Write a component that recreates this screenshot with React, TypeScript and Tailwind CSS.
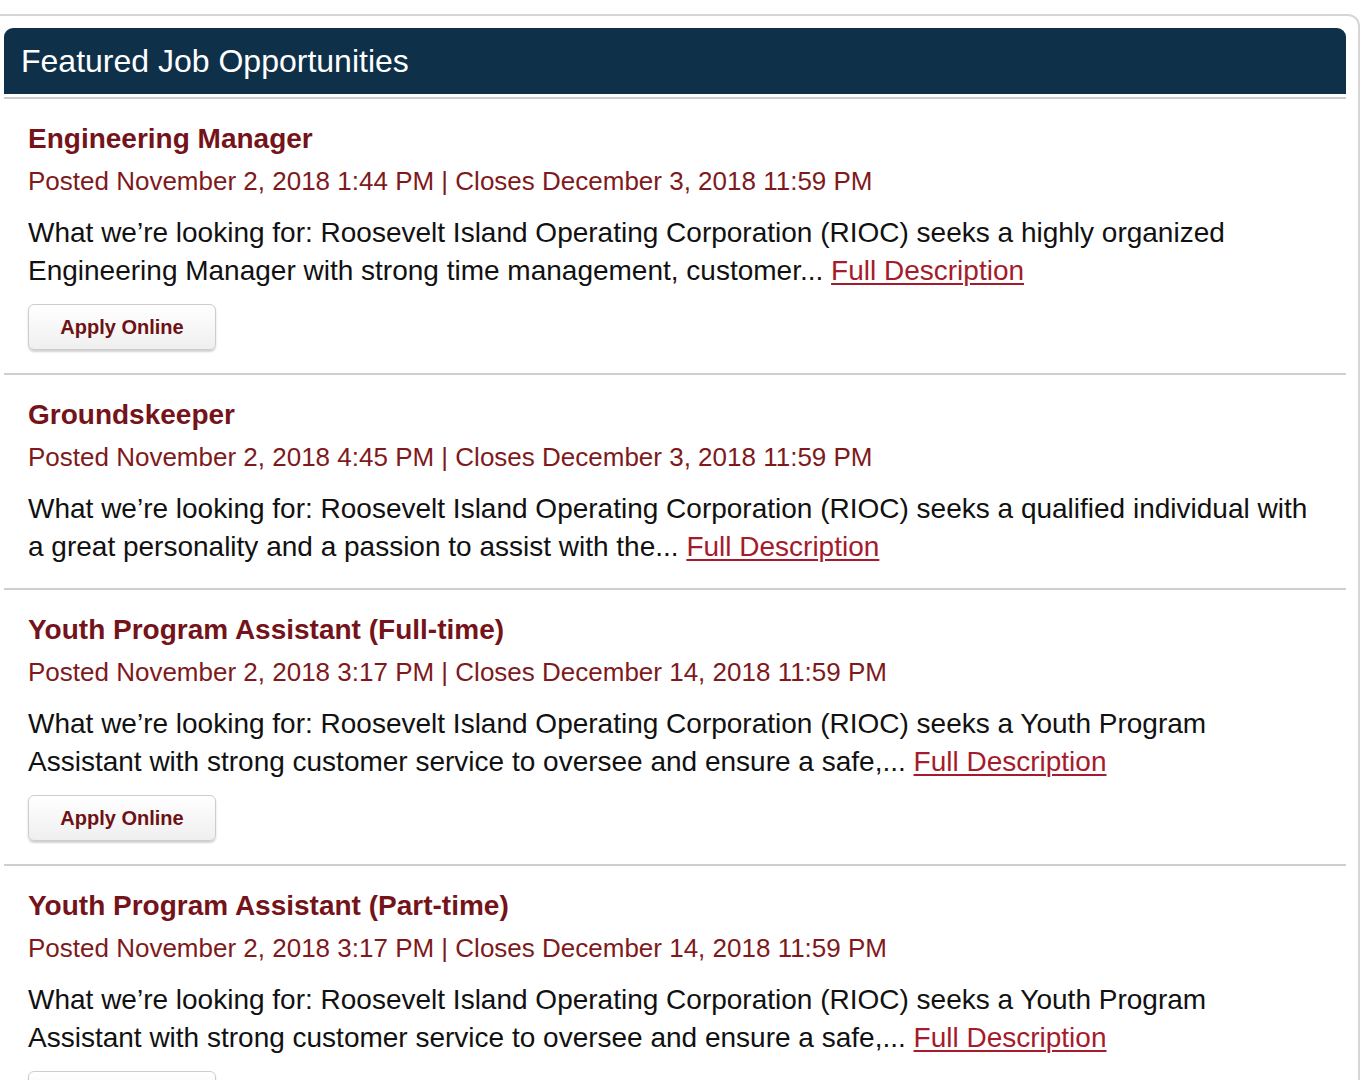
import React from "react";

type Job = {
  title: string;
  posted: string;
  closes: string;
  desc: string;
  apply: boolean;
};

const jobs: Job[] = [
  {
    title: "Engineering Manager",
    posted: "November 2, 2018 1:44 PM",
    closes: "December 3, 2018 11:59 PM",
    desc: "What we\u2019re looking for: Roosevelt Island Operating Corporation (RIOC) seeks a highly organized Engineering Manager with strong time management, customer...",
    apply: true,
  },
  {
    title: "Groundskeeper",
    posted: "November 2, 2018 4:45 PM",
    closes: "December 3, 2018 11:59 PM",
    desc: "What we\u2019re looking for: Roosevelt Island Operating Corporation (RIOC) seeks a qualified individual with a great personality and a passion to assist with the...",
    apply: false,
  },
  {
    title: "Youth Program Assistant (Full-time)",
    posted: "November 2, 2018 3:17 PM",
    closes: "December 14, 2018 11:59 PM",
    desc: "What we\u2019re looking for: Roosevelt Island Operating Corporation (RIOC) seeks a Youth Program Assistant with strong customer service to oversee and ensure a safe,...",
    apply: true,
  },
  {
    title: "Youth Program Assistant (Part-time)",
    posted: "November 2, 2018 3:17 PM",
    closes: "December 14, 2018 11:59 PM",
    desc: "What we\u2019re looking for: Roosevelt Island Operating Corporation (RIOC) seeks a Youth Program Assistant with strong customer service to oversee and ensure a safe,...",
    apply: true,
  },
];

function JobItem({ job }: { job: Job }) {
  return (
    <div
      className={
        "border-b-2 border-[#cfcfcf] pl-[24px] pr-[28px] pt-[25px] " +
        (job.apply ? "pb-[23px]" : "pb-[22px]")
      }
    >
      <div className="text-[28px] leading-[30px] font-bold text-[#74131a]">{job.title}</div>
      <div className="mt-[13px] text-[26px] leading-[28px] text-[#7e1a1c]">
        Posted {job.posted} | Closes {job.closes}
      </div>
      <p className="mt-[19px] text-[28px] leading-[38px] text-[#111]">
        {job.desc}{" "}
        <a href="#" className="text-[#a41c2c] underline underline-offset-[3px] decoration-[1.5px]">
          Full Description
        </a>
      </p>
      {job.apply && (
        <button className="mt-[14px] h-[46px] w-[188px] rounded-[6px] border border-[#cdcdcd] bg-gradient-to-b from-white to-[#efefef] text-[20px] font-bold text-[#6e1114] shadow-[0_2px_2px_rgba(0,0,0,0.18)]">
          Apply Online
        </button>
      )}
    </div>
  );
}

export default function App() {
  return (
    <div
      className="min-h-[1080px] bg-white pt-[14px]"
      style={{ fontFamily: '"Liberation Sans", Arial, sans-serif' }}
    >
      <div className="w-[1360px] border-t-2 border-r-2 border-[#d6d6d6] rounded-tr-[12px] pt-[12px] pl-[4px] pr-[12px]">
        <div className="h-[66px] rounded-t-[9px] bg-[#0f3049] pl-[17px] flex items-center">
          <h2 className="text-[32px] leading-none text-white">Featured Job Opportunities</h2>
        </div>
        <div className="mt-[3px] h-[2px] bg-[#cbcbcb]" />
        {jobs.map((j, i) => (
          <JobItem key={i} job={j} />
        ))}
      </div>
    </div>
  );
}
